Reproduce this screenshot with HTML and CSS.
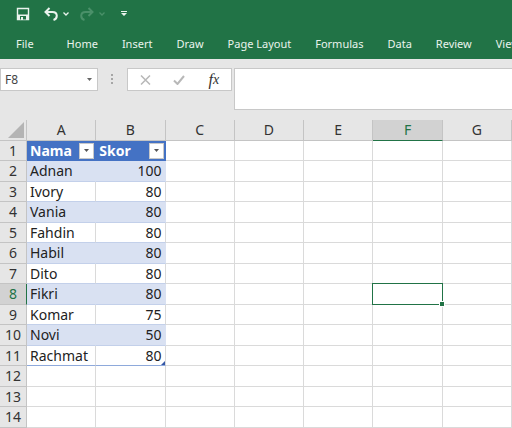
FILE: index.html
```
<!DOCTYPE html>
<html lang="en">
<head>
  <meta charset="UTF-8" />
  <meta name="viewport" content="width=device-width, initial-scale=1.0"/>
  <title>Skor</title>
  <link rel="stylesheet" href="styles.css">
</head>
<body>
  <header class="ribbon">
    <!-- Quick access toolbar -->
    <div class="quick-access">
      <button class="save" aria-label="Save">
        <svg width="14" height="14" viewBox="0 0 14 14"><path d="M1.500 1.500h11v11h-11z" fill="none" stroke="#eaf3ed" stroke-width="1.400"/><path d="M1 7.500h12V13H1z" fill="#eaf3ed"/><path d="M4 9h6v3.500H4z" fill="#217346"/><path d="M5 10h2v3H5z" fill="#eaf3ed"/></svg>
      </button>
      <button class="undo" aria-label="Undo">
        <svg width="14" height="14" viewBox="0 0 14 14"><path d="M5.500 1L1.500 5l4 4M2 5h6.500c5.500 0 5.500 6.500 1 8" fill="none" stroke="#eaf3ed" stroke-width="2"/></svg>
      </button>
      <button class="more" aria-label="Undo list">
        <svg width="6" height="4" viewBox="0 0 6 4"><path d="M.5.500L3 3 5.500.5" fill="none" stroke="#eaf3ed" stroke-width="1.300"/></svg>
      </button>
      <button class="redo" aria-label="Redo" disabled>
        <svg width="14" height="14" viewBox="0 0 14 14"><path d="M8.500 1l4 4-4 4M12 5H5.500c-5.500 0-5.500 6.500-1 8" fill="none" stroke="#4a9069" stroke-width="2"/></svg>
      </button>
      <button class="more" aria-label="Redo list" disabled>
        <svg width="6" height="4" viewBox="0 0 6 4"><path d="M.5.500L3 3 5.500.5" fill="none" stroke="#4a9069" stroke-width="1.300"/></svg>
      </button>
      <button class="customize" aria-label="Customize toolbar">
        <svg width="6" height="6" viewBox="0 0 6 6"><path d="M0 0h6v1H0zM0 2h6L3 5z" fill="#eaf3ed"/></svg>
      </button>
    </div>
    <nav class="tabs">
      <a class="file" href="#">File</a>
      <a href="#">Home</a>
      <a href="#">Insert</a>
      <a href="#">Draw</a>
      <a href="#">Page Layout</a>
      <a href="#">Formulas</a>
      <a href="#">Data</a>
      <a href="#">Review</a>
      <a href="#">View</a>
    </nav>
  </header>

  <div class="formula-bar">
    <div class="name-box">
      <input type="text" value="F8" aria-label="Name box">
      <button aria-label="Names"><svg width="5" height="3" viewBox="0 0 5 3"><path d="M0 0h5L2.500 3z" fill="#666"/></svg></button>
    </div>
    <svg class="grip" width="2" height="10" viewBox="0 0 2 10"><path d="M0 0h2v2H0zM0 4h2v2H0zM0 8h2v2H0z" fill="#a6a6a6"/></svg>
    <div class="entry-buttons">
      <button aria-label="Cancel"><svg width="11" height="10" viewBox="0 0 11 10"><path d="M1 .5l9 9M10 .5l-9 9" stroke="#b8b8b8" stroke-width="1.500"/></svg></button>
      <button aria-label="Enter"><svg width="12" height="10" viewBox="0 0 12 10"><path d="M1 5.500L4.500 9 11 1" fill="none" stroke="#b8b8b8" stroke-width="2"/></svg></button>
      <button class="fx" aria-label="Insert function">f<small>x</small></button>
    </div>
    <input class="formula" type="text" aria-label="Formula">
  </div>

  <table class="sheet">
    <thead>
      <tr>
        <th class="corner"><svg width="16" height="16" viewBox="0 0 16 16"><path d="M16 0v16H0z" fill="#b4b4b4"/></svg></th>
        <th>A</th><th>B</th><th>C</th><th>D</th><th>E</th><th class="current">F</th><th>G</th>
      </tr>
    </thead>
    <tbody>
      <tr class="title"><th>1</th>
        <td><div>Nama<button aria-label="Filter Nama"><svg width="5" height="3" viewBox="0 0 5 3"><path d="M0 0h5L2.500 3z" fill="#555"/></svg></button></div></td>
        <td><div>Skor<button aria-label="Filter Skor"><svg width="5" height="3" viewBox="0 0 5 3"><path d="M0 0h5L2.500 3z" fill="#555"/></svg></button></div></td>
        <td></td><td></td><td></td><td></td><td></td></tr>
      <tr class="band"><th>2</th><td>Adnan</td><td>100</td><td></td><td></td><td></td><td></td><td></td></tr>
      <tr class="data"><th>3</th><td>Ivory</td><td>80</td><td></td><td></td><td></td><td></td><td></td></tr>
      <tr class="band"><th>4</th><td>Vania</td><td>80</td><td></td><td></td><td></td><td></td><td></td></tr>
      <tr class="data"><th>5</th><td>Fahdin</td><td>80</td><td></td><td></td><td></td><td></td><td></td></tr>
      <tr class="band"><th>6</th><td>Habil</td><td>80</td><td></td><td></td><td></td><td></td><td></td></tr>
      <tr class="data"><th>7</th><td>Dito</td><td>80</td><td></td><td></td><td></td><td></td><td></td></tr>
      <tr class="band"><th class="current">8</th><td>Fikri</td><td>80</td><td></td><td></td><td></td><td class="selected"></td><td></td></tr>
      <tr class="data"><th>9</th><td>Komar</td><td>75</td><td></td><td></td><td></td><td></td><td></td></tr>
      <tr class="band"><th>10</th><td>Novi</td><td>50</td><td></td><td></td><td></td><td></td><td></td></tr>
      <tr class="data last"><th>11</th><td>Rachmat</td><td>80</td><td></td><td></td><td></td><td></td><td></td></tr>
      <tr><th>12</th><td></td><td></td><td></td><td></td><td></td><td></td><td></td></tr>
      <tr><th>13</th><td></td><td></td><td></td><td></td><td></td><td></td><td></td></tr>
      <tr><th>14</th><td></td><td></td><td></td><td></td><td></td><td></td><td></td></tr>
    </tbody>
  </table>
</body>
</html>
```
FILE: styles.css
```
* {
  box-sizing: border-box;
}

body {
  margin: 0;
  background: #e6e6e6;
  font-family: "Noto Sans", sans-serif;
  color: #222;
  overflow-x: hidden;
}

button {
  display: flex;
  align-items: center;
  justify-content: center;
  padding: 0;
  border: none;
  background: none;
}

input {
  border: none;
  outline: none;
  background: #fff;
  font-family: inherit;
}

/* Green ribbon */
.ribbon {
  background: #217346;
  overflow: hidden;
}

.quick-access {
  display: flex;
  align-items: center;
  height: 28px;
  padding-left: 16px;
}

.undo {
  margin-left: 14px;
}

.redo {
  margin-left: 11px;
}

.more {
  margin-left: 5px;
}

.customize {
  margin-left: 16px;
}

.tabs {
  display: flex;
  gap: 24px;
  height: 31px;
  padding-left: 16px;
  line-height: 32px;
}

.tabs a {
  color: #eaf3ed;
  font-size: 11px;
  text-decoration: none;
  white-space: nowrap;
}

.tabs .file {
  margin-right: 9px;
}

/* Formula bar */
.formula-bar {
  display: flex;
  align-items: flex-start;
  padding: 9px 0 10px;
}

.name-box {
  display: flex;
  width: 98px;
  height: 23px;
  border: 1px solid #c8c8c8;
  background: #fff;
}

.name-box input {
  flex: 1;
  min-width: 0;
  padding: 0 4px;
  font-size: 12px;
  color: #444;
}

.name-box button {
  width: 16px;
}

.grip {
  margin: 6px 14px 0 13px;
}

.entry-buttons {
  display: flex;
  width: 105px;
  height: 23px;
  border: 1px solid #c8c8c8;
  background: #fff;
}

.entry-buttons button {
  flex: 1;
}

.entry-buttons .fx {
  font: italic 16px "Liberation Serif", serif;
  color: #333;
}

.fx small {
  font-size: 14px;
}

.formula {
  flex: 1;
  min-width: 0;
  height: 42px;
  margin-left: 2px;
  border: 1px solid #c8c8c8;
  border-right: none;
}

/* Sheet */
.sheet {
  width: 100%;
  table-layout: fixed;
  border-spacing: 0;
  font-size: 14px;
  line-height: 18px;
}

.sheet th,
.sheet td {
  height: 20px;
  padding: 0 3px;
  border: solid #dadada;
  border-width: 0 1px 1px 0;
}

.sheet tbody tr:nth-child(even) > * {
  height: 21px;
}

.sheet th {
  padding: 0;
  background: #e6e6e6;
  border-color: #c4c4c4;
  font-weight: normal;
  color: #333;
}

.sheet thead th {
  height: 21px;
}

.sheet .corner {
  width: 27px;
  padding-left: 8px;
}

.corner svg {
  display: block;
}

.sheet th.current {
  background: #d2d2d2;
  color: #217346;
}

.sheet thead .current {
  border-bottom-color: #217346;
}

.sheet tbody .current {
  border-right-color: #217346;
}

.sheet td {
  background: #fff;
  color: #222;
}

.sheet td:nth-child(3) {
  text-align: right;
}

.title td:nth-child(-n+3) {
  padding: 0 1px 0 3px;
  background: #4472c4;
  border-color: #4472c4;
  color: #fff;
  font-weight: bold;
}

.title div {
  display: flex;
  align-items: center;
  justify-content: space-between;
}

.title button {
  width: 15px;
  height: 16px;
  background: #fff;
  border: 1px solid #c8c8c8;
}

.band td:nth-child(-n+3) {
  background: #d9e1f2;
  border-color: #d9e1f2;
  border-bottom-color: #c3d0ea;
}

.data td:nth-child(-n+3) {
  border-bottom-color: #c3d0ea;
}

.sheet .last td:nth-child(-n+3) {
  border-bottom-color: #8ea9db;
}

/* Table resize handle */
.last td:nth-child(3) {
  position: relative;
}

.last td:nth-child(3)::after {
  content: "";
  position: absolute;
  right: 0;
  bottom: 0;
  border: 2px solid #3457a6;
  border-top-color: transparent;
  border-left-color: transparent;
}

/* Active cell */
.selected {
  position: relative;
}

.selected::before {
  content: "";
  position: absolute;
  inset: -1px;
  border: 1px solid #217346;
}

.selected::after {
  content: "";
  position: absolute;
  right: -2px;
  bottom: -2px;
  width: 4px;
  height: 4px;
  background: #217346;
  outline: 1px solid #fff;
}
```
